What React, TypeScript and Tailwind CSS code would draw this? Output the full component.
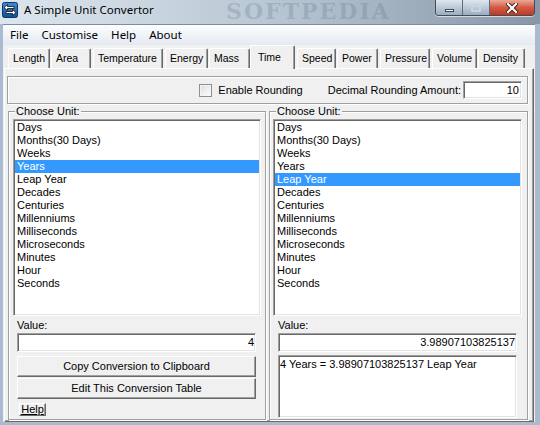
import React from "react";

const units = [
  "Days",
  "Months(30 Days)",
  "Weeks",
  "Years",
  "Leap Year",
  "Decades",
  "Centuries",
  "Millenniums",
  "Milliseconds",
  "Microseconds",
  "Minutes",
  "Hour",
  "Seconds",
];

const tabs = [
  { label: "Length", cls: "w-[42px]" },
  { label: "Area", cls: "ml-[1px] w-[40px]" },
  { label: "Temperature", cls: "ml-[2px] w-[70px]" },
  { label: "Energy", cls: "ml-[2px] w-[43px]" },
  { label: "Mass", cls: "ml-[1px] w-[41px]" },
  { label: "Time", cls: "w-[45px]", active: true },
  { label: "Speed", cls: "ml-[2px] w-[39px]" },
  { label: "Power", cls: "ml-[1px] w-[41px]" },
  { label: "Pressure", cls: "ml-[2px] w-[50px]" },
  { label: "Volume", cls: "ml-[2px] w-[45px]" },
  { label: "Density", cls: "ml-[1px] w-[47px]" },
];

const sunken =
  "border border-t-[#a0a0a0] border-l-[#a0a0a0] border-r-white border-b-white shadow-[inset_1px_1px_0_#696969,inset_-1px_-1px_0_#e3e3e3]";
const raised =
  "border border-t-white border-l-white border-r-[#696969] border-b-[#696969] shadow-[inset_-1px_-1px_0_#a0a0a0]";
const etched = "border border-[#a0a0a0] shadow-[inset_1px_1px_0_#fff,1px_1px_0_#fff]";

function AppIcon() {
  return (
    <svg width="16" height="16" viewBox="0 0 16 16" className="shrink-0">
      <defs>
        <linearGradient id="ic" x1="0" y1="0" x2="0" y2="1">
          <stop offset="0" stopColor="#3f8ed8" />
          <stop offset="1" stopColor="#0f4f94" />
        </linearGradient>
      </defs>
      <rect x="0.5" y="0.5" width="15" height="15" rx="2" fill="url(#ic)" stroke="#0b3566" />
      <path
        d="M2 5.5 L5.5 2.5 V4.5 H12 V6.5 H5.5 V8.5 Z"
        fill="#fff"
        stroke="#111"
        strokeWidth="0.8"
        strokeLinejoin="round"
      />
      <path
        d="M14 10.5 L10.5 7.5 V9.5 H4 V11.5 H10.5 V13.5 Z"
        fill="#fff"
        stroke="#111"
        strokeWidth="0.8"
        strokeLinejoin="round"
      />
    </svg>
  );
}

function WindowButtons() {
  return (
    <div className="flex self-start h-[16px] mr-[5px] rounded-b-[4px] border border-t-0 border-[#3c4d5f] overflow-hidden shadow-[0_1px_0_rgba(255,255,255,0.6)]">
      <div className="w-[27px] flex items-end justify-center pb-[3px] bg-gradient-to-b from-[#dfe7ef] to-[#9cadbf] border-r border-[#5a6b7c]">
        <div className="w-[9px] h-[3px] bg-white border border-[#36475a]" />
      </div>
      <div className="w-[27px] flex items-center justify-center bg-gradient-to-b from-[#dfe7ef] to-[#9cadbf] border-r border-[#5a6b7c]">
        <div className="w-[10px] h-[8px] border-2 border-t-[3px] border-[#c9d4df] bg-transparent" />
      </div>
      <div className="w-[44px] flex items-center justify-center bg-gradient-to-b from-[#e9a898] via-[#d25a44] to-[#c0381f]">
        <svg width="12" height="10" viewBox="0 0 12 10">
          <path d="M2 1 L10 9 M10 1 L2 9" stroke="#3a1a14" strokeWidth="4" strokeLinecap="square" />
          <path d="M2 1 L10 9 M10 1 L2 9" stroke="#fff" strokeWidth="2.2" strokeLinecap="square" />
        </svg>
      </div>
    </div>
  );
}

function UnitList({ selected }: { selected: string }) {
  return (
    <div className={`mt-[1px] h-[197px] bg-white px-[1px] pt-[1px] overflow-hidden ${sunken}`}>
      {units.map((u) => (
        <div
          key={u}
          className={`h-[13px] leading-[13px] pl-[2px] whitespace-nowrap ${
            u === selected ? "bg-[#3399ff] text-white" : ""
          }`}
        >
          {u}
        </div>
      ))}
    </div>
  );
}

export default function App() {
  return (
    <div className="w-[540px] h-[425px] overflow-hidden flex flex-col bg-[#a9bccf] text-black font-['Liberation_Sans',Arial,sans-serif] text-[11px]">
      {/* title bar */}
      <div className="relative h-[24px] shrink-0 flex justify-between bg-gradient-to-r from-[#dde6ee] via-[#b9c7d4] to-[#8797a8]">
        <span className="pointer-events-none absolute left-[226px] top-0 font-['DejaVu_Serif',serif] font-bold text-[22px] leading-[22px] tracking-[2px] text-[#5d6f82]/25">
          SOFTPEDIA
        </span>
        <div className="relative flex items-start gap-[6px] pl-[2px] pt-[2px]">
          <AppIcon />
          <span className="font-['Noto_Sans',sans-serif] text-[11.5px] leading-[16px] text-black">
            A Simple Unit Convertor
          </span>
        </div>
        <WindowButtons />
      </div>

      {/* client area */}
      <div className="flex-1 ml-[3px] mr-[5px] mb-[3px] flex flex-col bg-[#f0f0f0] border-t border-[#7d8d9d]">
        {/* menu */}
        <div className="h-[20px] shrink-0 flex items-center gap-[13px] pl-[7px] bg-gradient-to-b from-[#fcfdfe] to-[#e4eaf2] font-['Noto_Sans',sans-serif] text-[11.5px]">
          <span>File</span>
          <span>Customise</span>
          <span>Help</span>
          <span>About</span>
        </div>

        {/* tabs */}
        <div className="h-[23px] shrink-0 flex items-end pl-[5px] text-[10.5px]">
          {tabs.map((t) =>
            t.active ? (
              <div
                key={t.label}
                className={`${t.cls} relative z-10 -mb-[1px] h-[24px] pl-[7px] pt-[2px] leading-[18px] bg-[#f0f0f0] border-t border-l border-white border-r border-r-[#696969] rounded-t-[2px] shadow-[inset_-1px_0_0_#a0a0a0]`}
              >
                {t.label}
              </div>
            ) : (
              <div
                key={t.label}
                className={`${t.cls} h-[20px] pl-[4px] leading-[18px] border-t border-l border-white border-r border-r-[#696969] rounded-t-[2px] shadow-[inset_-1px_0_0_#a0a0a0] whitespace-nowrap overflow-hidden`}
              >
                {t.label}
              </div>
            )
          )}
        </div>

        {/* tab panel */}
        <div className="flex-1 mx-[1px] pl-[2px] pr-[5px] border-t border-l border-white border-r border-b border-r-[#696969] border-b-[#696969] shadow-[inset_-1px_-1px_0_#a0a0a0]">
          {/* rounding options */}
          <div className={`mt-[7px] h-[28px] flex items-center justify-end pr-[5px] ${etched}`}>
            <div className="w-[13px] h-[13px] border border-[#8e8f8f] bg-gradient-to-br from-[#dcdcdc] to-white shadow-[inset_0_0_0_1px_#f4f4f4]" />
            <span className="ml-[6px]">Enable Rounding</span>
            <span className="ml-[25px]">Decimal Rounding Amount:</span>
            <div className={`ml-[2px] w-[59px] h-[18px] bg-white text-right pr-[2px] leading-[16px] ${sunken}`}>
              10
            </div>
          </div>

          {/* converter */}
          <div className="mt-[1px] flex gap-[3px] ml-[1px]">
            <fieldset className={`w-[258px] pl-[4px] pr-[4px] pb-[2px] ${etched}`}>
              <legend className="ml-[2px] px-[1px] leading-[13px] bg-[#f0f0f0]">Choose Unit:</legend>
              <UnitList selected="Years" />
              <div className="ml-[4px] mr-[5px] flex flex-col">
                <div className="h-[17px] pt-[3px] leading-[13px]">Value:</div>
                <div className={`h-[19px] bg-white text-right pr-[1px] leading-[17px] ${sunken}`}>4</div>
                <div className={`mt-[4px] h-[21px] flex items-center justify-center ${raised}`}>
                  Copy Conversion to Clipboard
                </div>
                <div className={`mt-[1px] h-[21px] flex items-center justify-center ${raised}`}>
                  Edit This Conversion Table
                </div>
                <div
                  className={`mt-[4px] ml-[2px] w-[27px] h-[13px] leading-[11px] text-center underline ${raised}`}
                >
                  Help
                </div>
              </div>
            </fieldset>

            <fieldset className={`flex-1 pl-[3px] pr-[5px] pb-[1px] ${etched}`}>
              <legend className="ml-[3px] px-[1px] leading-[13px] bg-[#f0f0f0]">Choose Unit:</legend>
              <UnitList selected="Leap Year" />
              <div className="ml-[5px] mr-[5px] flex flex-col">
                <div className="h-[17px] pt-[3px] leading-[13px]">Value:</div>
                <div className={`h-[19px] bg-white text-right pr-[1px] leading-[17px] ${sunken}`}>
                  3.98907103825137
                </div>
                <div className={`mt-[3px] h-[63px] bg-white pl-[1px] pt-[2px] leading-[13px] ${sunken}`}>
                  4 Years = 3.98907103825137 Leap Year
                </div>
              </div>
            </fieldset>
          </div>
        </div>
      </div>
    </div>
  );
}
